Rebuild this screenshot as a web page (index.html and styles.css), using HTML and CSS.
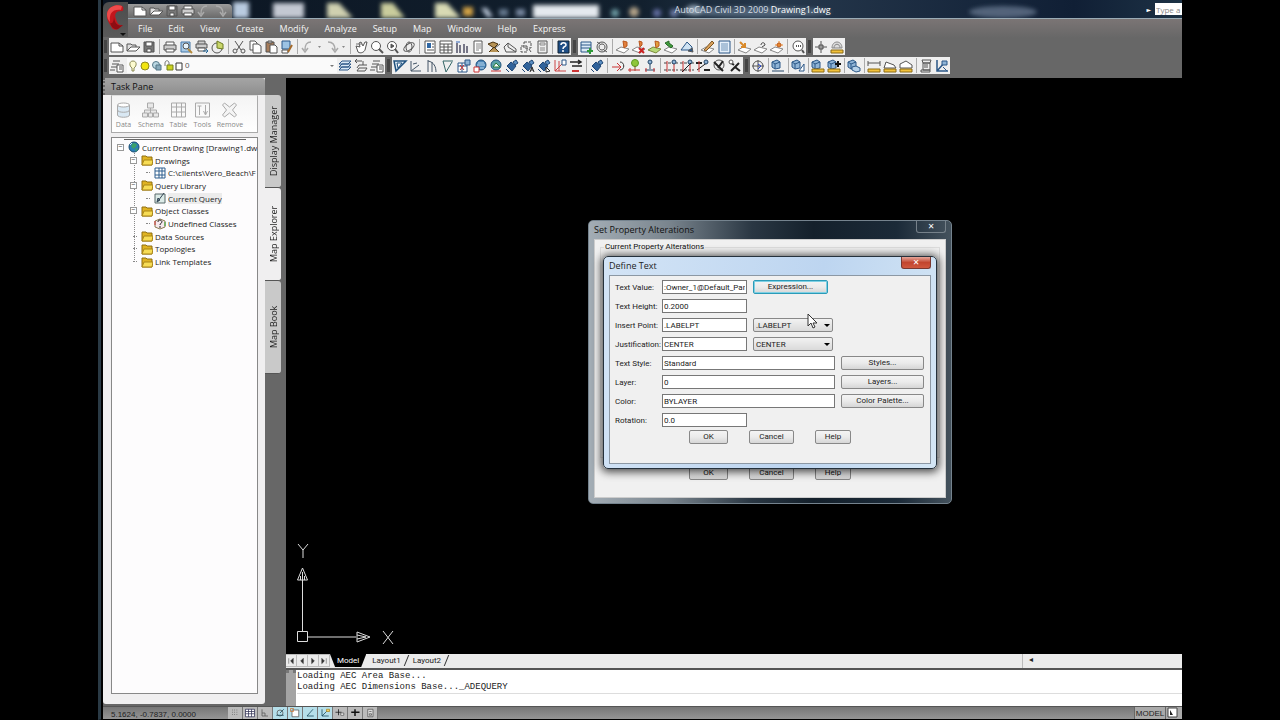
FILE: index.html
```html
<!DOCTYPE html>
<html lang="en">
<head>
    <meta charset="UTF-8">
    <meta name="viewport" content="width=device-width, initial-scale=1.0">
    <title>AutoCAD Civil 3D 2009 Drawing1.dwg</title>
    <link rel="stylesheet" href="styles.css">
</head>
<body>
    <div class="app">
        <header class="titlebar">
            <svg class="glass" aria-hidden="true">
                <defs><filter id="soft" x="-20%" y="-50%" width="140%" height="200%"><feGaussianBlur stdDeviation="2"/></filter></defs>
                <g filter="url(#soft)">
                    <rect x="130" y="2" width="16" height="16" fill="#b9cbe0"/>
                    <rect x="170" y="3" width="31" height="15" fill="#c3c8d2"/>
                    <path d="M224 3h12l14 15h-26z" fill="#cfd0b0"/>
                    <path d="M278 3h12l12 15h-24z" fill="#c9cc9c"/>
                    <path d="M332 3h12l14 15h-26z" fill="#d8dab4"/>
                    <rect x="360" y="7" width="10" height="9" fill="#d0a044"/>
                    <path d="M378 8l6 0 6 9h-6z" fill="#b7c4d6"/>
                    <rect x="396" y="9" width="9" height="7" fill="#65788e"/>
                    <rect x="413" y="9" width="9" height="7" fill="#7888a0"/>
                    <rect x="430" y="5" width="66" height="13" fill="#e4e9ee"/>
                    <circle cx="512" cy="13" r="4" fill="#6b98a0"/>
                    <circle cx="531" cy="12" r="5" fill="#b0a087"/>
                    <circle cx="554" cy="13" r="4" fill="#626da0"/>
                    <circle cx="571" cy="13" r="4" fill="#6d7ba8"/>
                    <ellipse cx="650" cy="12" rx="78" ry="5" fill="#506478"/>
                    <ellipse cx="591" cy="10" rx="8" ry="5" fill="#91a2b2"/>
                    <ellipse cx="900" cy="12" rx="34" ry="6" fill="#52647a"/>
                </g>
            </svg>
            <button class="app-logo" aria-label="Application menu">
                <svg viewBox="0 0 24 32">
                    <path d="M19 2c-5-2-14 0-15 8-1 6 3 10 5 14 1 2 4 2 6 1l5-4c-4 1-6-2-7-6-2-5 0-8 5-8 3 1 3-4 1-5z" fill="#c3171d"/>
                    <path d="M19 2c-5-2-14 0-15 8 0 3 1 6 3 8C6 10 9 5 18 6z" fill="#ee4a4a"/>
                    <path d="M11 11c0 6 2 12 9 10l-5 4c-4 1-6-1-8-6 3 1 4-2 4-8z" fill="#8d0d13"/>
                    <path d="M17 29h6l-3 3z" fill="#111"/>
                </svg>
            </button>
            <div class="quick" data-tools="new open save print undo redo"></div>
            <h1 class="title">AutoCAD Civil 3D 2009 <b>Drawing1.dwg</b></h1>
            <span class="play">&#9658;</span>
            <input class="search" type="text" placeholder="Type a k" aria-label="Search">
        </header>
        <nav class="menubar">
            <a href="#">File</a>
            <a href="#">Edit</a>
            <a href="#">View</a>
            <a href="#">Create</a>
            <a href="#">Modify</a>
            <a href="#">Analyze</a>
            <a href="#">Setup</a>
            <a href="#">Map</a>
            <a href="#">Window</a>
            <a href="#">Help</a>
            <a href="#">Express</a>
        </nav>
        <div class="toolrow">
            <div class="toolbar" data-tools="new open save | print preview publish dwf | cut copy paste match | undo arrow redo arrow | pan zoom zoomwin orbit | props center palette sheet markup plane refs calc | help"></div>
            <div class="toolbar" data-tools="dbadd sync | pin pinx pingrn pinret shape | pencil list | arrin arrswap arrnew | inspect"></div>
            <div class="toolbar" data-tools="cross dome"></div>
        </div>
        <div class="toolrow">
            <div class="toolbar layers">
                <div class="toolset" data-tools="layer"></div>
                <label class="layer-combo">
                    <svg viewBox="0 0 58 16" aria-hidden="true">
                        <path d="M5 10c-3-2-3-7 1-7s4 5 1 7v3H5z" fill="#fdfbd0" stroke="#8a8a55"/>
                        <circle cx="18" cy="8" r="4" fill="#f1e511" stroke="#8f8a20"/>
                        <circle cx="29" cy="7" r="3.500" fill="#bcd8e3" stroke="#578"/><path d="M29 7h5v5h-5z" fill="#8ab" stroke="#578"/>
                        <path d="M38 8V5c0-3 4-3 4 0v2" fill="none" stroke="#777"/><path d="M40 7h6v5h-6z" fill="#cbd321" stroke="#77801a"/>
                        <path d="M49 5h6v7h-6z" fill="#fff" stroke="#333"/>
                    </svg>
                    <select aria-label="Layer"><option>0</option></select>
                </label>
                <div class="toolset" data-tools="layer1 layer2 layer"></div>
            </div>
            <div class="toolbar" data-tools="tri ang1 ang2 ang3 chk globe globe2 sat sata satb redgrid lines | sat | turn tree node | rail railx railz bolt screw"></div>
            <div class="toolbar tight" data-tools="target | cube | cubetri | cubebar cubeplus | cubes | ruler area area2 | scroll plot"></div>
        </div>
        <main class="workspace">
            <aside class="task-pane">
                <h2 class="pane-title">Task Pane</h2>
                <div class="pane-tools">
                    <button><svg viewBox="0 0 18 18"><path d="M3 4v10c0 3 12 3 12 0V4" fill="#d9e8f3"/><ellipse cx="9" cy="4" rx="6" ry="2" fill="#fff"/><path d="M3 9c0 3 12 3 12 0"/></svg>Data</button>
                    <button><svg viewBox="0 0 18 18"><path d="M6 2h6v5H6zM1 12h5v4H1zM7 12h4v4H7zM12 12h5v4h-5zM9 7v5M3 12V9h12v3" fill="#e8e8e8"/></svg>Schema</button>
                    <button><svg viewBox="0 0 18 18"><path d="M2 2h14v14H2zM2 6h14M2 11h14M7 2v14M12 2v14"/></svg>Table</button>
                    <button><svg viewBox="0 0 18 18"><path d="M2 2h14v14H2z"/><path d="M6 5v9M4 5h4M12 4v9M10 10l2 4 2-4"/></svg>Tools</button>
                    <button><svg viewBox="0 0 18 18"><path d="M2 4l2-2 5 4 5-4 2 2-4 5 4 5-2 2-5-4-5 4-2-2 4-5z" fill="#f4f4f4"/></svg>Remove</button>
                </div>
                <div class="tree-box">
                    <svg class="symbols" aria-hidden="true">
                        <symbol id="folder" viewBox="0 0 12 12"><path d="M1 2h4l1 1h5v8H1z" fill="#e0b322" stroke="#8f6f10"/><path d="M1 11l2-5h9l-1 5z" fill="#f7dc55" stroke="#a98519"/></symbol>
                        <symbol id="globe" viewBox="0 0 12 12"><circle cx="6" cy="6" r="5" fill="#2a7fb8" stroke="#164a70"/><path d="M5 2l4 1-1 3-3 2-2-3zM7 8l3-1-2 4z" fill="#3aa06a"/><path d="M2 4l2-2" stroke="#cfeaff"/></symbol>
                        <symbol id="grid" viewBox="0 0 12 12"><path d="M1 1h10v10H1z" fill="#fff" stroke="#2f5f8f"/><path d="M1 4h10M1 8h10M5 1v10M8 1v10" stroke="#2f5f8f"/></symbol>
                        <symbol id="query" viewBox="0 0 12 12"><path d="M1 2h10v9H1z" fill="#dcebe8" stroke="#58686a"/><path d="M4 9l6-8M3 10l1-4 2 2z" stroke="#345" fill="#9bb"/></symbol>
                        <symbol id="ask" viewBox="0 0 12 12"><path d="M6 1l5 2v6l-5 2-5-2V3z" fill="#f6e9ee" stroke="#8a7a50"/><path d="M4 4c0-3 4-2 4 0 0 1-2 1-2 3M6 8v2" fill="none" stroke="#222"/><path d="M1 3v4" stroke="#c33"/><path d="M11 4v4" stroke="#3a3"/></symbol>
                    </svg>
                    <ul class="tree">
                        <li><i class="twist">&minus;</i><svg><use href="#globe"/></svg><span>Current Drawing [Drawing1.dw</span></li>
                        <li class="level1"><i class="twist">&minus;</i><svg><use href="#folder"/></svg><span>Drawings</span></li>
                        <li class="level2"><i class="twig"></i><svg><use href="#grid"/></svg><span>C:\clients\Vero_Beach\F</span></li>
                        <li class="level1"><i class="twist">&minus;</i><svg><use href="#folder"/></svg><span>Query Library</span></li>
                        <li class="level2"><i class="twig"></i><svg><use href="#query"/></svg><span class="current">Current Query</span></li>
                        <li class="level1"><i class="twist">&minus;</i><svg><use href="#folder"/></svg><span>Object Classes</span></li>
                        <li class="level2"><i class="twig"></i><svg><use href="#ask"/></svg><span>Undefined Classes</span></li>
                        <li class="level1"><i class="twig"></i><svg><use href="#folder"/></svg><span>Data Sources</span></li>
                        <li class="level1"><i class="twig"></i><svg><use href="#folder"/></svg><span>Topologies</span></li>
                        <li class="level1"><i class="twig"></i><svg><use href="#folder"/></svg><span>Link Templates</span></li>
                    </ul>
                </div>
            </aside>
            <div class="side-tabs">
                <button>Display Manager</button>
                <button class="active">Map Explorer</button>
                <button>Map Book</button>
            </div>
            <section class="drawing">
                <div class="canvas">
                    <svg class="ucs" viewBox="0 0 100 106" aria-hidden="true">
                        <path d="M2.500 92.500h10v10h-10zM7.500 92V40M13 98h48M7.500 29l-5 12h10zM75 98l-13-5v10z"/>
                        <path d="M7.500 33v8M5.500 37v4M9.500 37v4M62 96l9 2-9 2"/>
                        <path d="M3 5l5 6 5-6M8 11v8M88 92l10 13M98 92l-10 13"/>
                    </svg>
                    <div class="window outer">
                        <div class="window-title">Set Property Alterations<button class="close" aria-label="Close">&#10005;</button></div>
                        <div class="window-body">
                            <fieldset><legend>Current Property Alterations</legend></fieldset>
                            <div class="actions">
                                <button class="btn ok">OK</button>
                                <button class="btn cancel">Cancel</button>
                                <button class="btn help">Help</button>
                            </div>
                        </div>
                    </div>
                    <div class="window inner">
                        <div class="window-title">Define Text<button class="close" aria-label="Close">&#10005;</button></div>
                        <form class="window-body">
                            <div class="fields">
                                <label for="value">Text Value:</label>
                                <input id="value" type="text" value=":Owner_1@Default_Parc">
                                <button type="button" class="btn focus">Expression...</button>

                                <label for="height">Text Height:</label>
                                <input id="height" type="text" value="0.2000">

                                <label for="insert">Insert Point:</label>
                                <input id="insert" type="text" value=".LABELPT">
                                <span class="drop"><select aria-label="Insert point list"><option>.LABELPT</option></select></span>

                                <label for="just">Justification:</label>
                                <input id="just" type="text" value="CENTER">
                                <span class="drop"><select aria-label="Justification list"><option>CENTER</option></select></span>

                                <label for="style">Text Style:</label>
                                <input id="style" class="wide" type="text" value="Standard">
                                <button type="button" class="btn side">Styles...</button>

                                <label for="layer">Layer:</label>
                                <input id="layer" class="wide" type="text" value="0">
                                <button type="button" class="btn side">Layers...</button>

                                <label for="color">Color:</label>
                                <input id="color" class="wide" type="text" value="BYLAYER">
                                <button type="button" class="btn side">Color Palette...</button>

                                <label for="rotation">Rotation:</label>
                                <input id="rotation" type="text" value="0.0">
                            </div>
                            <div class="actions">
                                <button type="button" class="btn ok">OK</button>
                                <button type="button" class="btn cancel">Cancel</button>
                                <button type="button" class="btn help">Help</button>
                            </div>
                        </form>
                    </div>
                    <svg class="pointer" viewBox="0 0 10 16" aria-hidden="true"><path d="M1 1v12l3-3 2 5 2-1-2-4h4z" fill="#fff" stroke="#333"/></svg>
                </div>
                <div class="layout-bar">
                    <div class="nav-buttons">
                        <button aria-label="First"><svg viewBox="0 0 11 12"><path d="M3 3v6M8 3v6L5 6z"/></svg></button>
                        <button aria-label="Previous"><svg viewBox="0 0 11 12"><path d="M7 3v6L4 6z"/></svg></button>
                        <button aria-label="Next"><svg viewBox="0 0 11 12"><path d="M4 3v6l3-3z"/></svg></button>
                        <button aria-label="Last"><svg viewBox="0 0 11 12"><path d="M8 3v6M3 3v6l3-3z"/></svg></button>
                    </div>
                    <button class="layout active">Model</button>
                    <button class="layout">Layout1</button>
                    <button class="layout">Layout2</button>
                    <div class="hscroll">&#9666;</div>
                </div>
                <div class="command">
                    <div class="command-grip"></div>
                    <div class="command-text">
                        <p>Loading AEC Area Base...</p>
                        <p>Loading AEC Dimensions Base..._ADEQUERY</p>
                    </div>
                </div>
            </section>
        </main>
        <footer class="statusbar">
            <span class="coords">5.1624, -0.7837, 0.0000</span>
            <div class="modes" data-tools="snap gridmode ortho polar osnap otrack ducs dyn lwt qp"></div>
            <button class="space">MODEL</button>
            <button class="maximize" aria-label="Maximize viewport"><svg viewBox="0 0 12 12"><path d="M2 1h9v9H2z" fill="#fff" stroke="#444"/><path d="M4 3v5h3z" fill="#222"/></svg></button>
        </footer>
    </div>
    <script src="toolbars.js"></script>
</body>
</html>
```
FILE: styles.css
```css
* {
    box-sizing: border-box;
}
body {
    margin: 0;
    background: #000;
    color: #222;
    font-family: "Open Sans", "Noto Sans", sans-serif;
    font-size: 9px;
}
button,
input,
select {
    font: inherit;
    color: inherit;
    margin: 0;
    padding: 0;
    border: 0;
    border-radius: 0;
    background: none;
}
a {
    color: inherit;
    text-decoration: none;
}
h1,
h2,
p,
ul {
    margin: 0;
    padding: 0;
    font-size: inherit;
    font-weight: normal;
    list-style: none;
}
.app {
    display: flex;
    flex-direction: column;
    height: 100vh;
    margin: 0 98px;
    border-left: 5px ridge #2a3a45;
    border-bottom: 1px solid #000;
    background: #676767;
    overflow: hidden;
}

/* title bar */
.titlebar {
    position: relative;
    display: flex;
    align-items: center;
    flex: none;
    height: 19px;
    padding-left: 25px;
    background: linear-gradient(90deg, #0b1522, #12202e 50%, #26384c 62%, #101f35 90%, #1d3245);
    border-bottom: 1px solid #9aabb5;
    color: #d5dde4;
}
.glass {
    position: absolute;
    left: 0;
    top: 0;
    width: 100%;
    height: 18px;
}
.app-logo {
    position: absolute;
    left: 0;
    top: 2px;
    z-index: 2;
    width: 25px;
    height: 35px;
    background: linear-gradient(#4c4c4c, #5a5a5a);
    border-radius: 6px 0 0 0;
}
.app-logo svg {
    display: block;
    width: 24px;
    height: 32px;
    overflow: visible;
}
.quick {
    position: relative;
    align-self: flex-end;
    display: flex;
    align-items: center;
    height: 14px;
    padding: 0 4px;
    background: linear-gradient(#9a9a9a, #6a6a6a);
    border-radius: 0 4px 0 0;
}
.title {
    position: absolute;
    left: 0;
    right: 0;
    padding-left: 220px;
    text-align: center;
    line-height: 19px;
}
.title b {
    font-weight: normal;
    color: #fff;
}
.play {
    position: relative;
    margin-left: auto;
    margin-right: 4px;
    font-family: "DejaVu Sans", sans-serif;
    font-size: 6px;
    color: #fff;
}
.search {
    position: relative;
    width: 27px;
    height: 12px;
    padding-left: 1px;
    background: #fff;
    font-size: 8px;
}
.search::placeholder {
    color: #888;
    opacity: 1;
}

/* menu */
.menubar {
    display: flex;
    align-items: center;
    flex: none;
    gap: 16px;
    height: 19px;
    padding-left: 35px;
    background: linear-gradient(#7b7575, #676767);
    color: #f4f4f4;
}

/* toolbars */
.toolrow {
    display: flex;
    flex: none;
    gap: 7px;
    height: 19px;
    padding: 0 0 2px 6px;
}
.toolbar,
.toolset {
    display: flex;
    align-items: center;
    background: #efefef;
}
.toolrow > .toolbar {
    position: relative;
}
.toolrow > .toolbar::before {
    content: "";
    position: absolute;
    left: -5px;
    top: 2px;
    bottom: 2px;
    width: 3px;
    background: #444;
}
.tool {
    width: 16px;
    height: 16px;
}
.tool svg {
    display: block;
    width: 16px;
    height: 16px;
    fill: none;
    stroke: #555;
}
.tool-arrow,
.tool-arrow svg {
    width: 8px;
}
.divider {
    width: 1px;
    height: 15px;
    margin: 0 2px;
    background: #aaa;
}
.tight .divider {
    margin: 0 1px 0 2px;
}
.layer-combo {
    position: relative;
    display: flex;
    align-items: center;
    width: 210px;
    height: 15px;
    margin-left: 2px;
    background: #fafafa;
}
.layer-combo svg {
    width: 58px;
    height: 16px;
}
.layer-combo select {
    flex: 1;
    appearance: none;
    font-family: "Liberation Sans", sans-serif;
    font-size: 8px;
    color: #555;
}
.layer-combo::after {
    content: "";
    position: absolute;
    right: 3px;
    top: 7px;
    border: 2px solid transparent;
    border-top-color: #777;
}

/* task pane */
.workspace {
    display: flex;
    flex: 1;
    min-height: 0;
    padding-top: 2px;
}
.task-pane {
    display: flex;
    flex-direction: column;
    width: 162px;
    margin-bottom: 2px;
    padding: 0 7px 10px 8px;
    background: #f0eff0;
    border-radius: 0 0 3px 3px;
}
.pane-title {
    margin: 0 -7px 0 -8px;
    padding-left: 6px;
    height: 17px;
    line-height: 17px;
    background: linear-gradient(#a5a5a5, #8e8e8e);
    border-left: 2px dotted #666;
    border-radius: 0 3px 0 0;
    color: #111;
}
.pane-tools {
    display: flex;
    height: 38px;
    padding-top: 5px;
    padding-left: 2px;
    gap: 5px;
    align-items: flex-start;
    border: 1px solid #aaa;
    border-top-color: #ddd;
    background: linear-gradient(#f4f4f4, #fff);
}
.pane-tools button {
    display: flex;
    flex-direction: column;
    align-items: center;
    font-size: 7px;
    line-height: 12px;
    color: #888;
}
.pane-tools svg {
    width: 19px;
    height: 18px;
    fill: none;
    stroke: #aaa;
}
.tree-box {
    flex: 1;
    margin-top: 4px;
    border: 1px solid #888;
    background: #fdfcfd;
    overflow: hidden;
}
.tree-box::before {
    content: "";
    display: block;
    margin: 1px 11px 1px 12px;
    height: 1px;
    background: #666;
}
.symbols {
    position: absolute;
    width: 0;
    height: 0;
}
.tree {
    position: relative;
    display: grid;
    grid-template-rows: repeat(10, 1fr);
    height: 127px;
    padding-left: 5px;
    font-size: 8px;
}
.tree::before {
    content: "";
    position: absolute;
    left: 22px;
    top: 12px;
    bottom: 6px;
    border-left: 1px dotted #888;
}
.tree li {
    position: relative;
    display: flex;
    align-items: center;
    white-space: nowrap;
}
.tree li svg {
    flex: none;
    width: 12px;
    height: 12px;
    margin: 0 2px 0 4px;
}
.tree .level1 {
    padding-left: 13px;
}
.tree .level2 {
    padding-left: 26px;
}
.twist {
    flex: none;
    width: 7px;
    height: 7px;
    border: 1px solid #999;
    background: #fff;
    font-style: normal;
    font-size: 7px;
    line-height: 4px;
    text-align: center;
}
.twig {
    flex: none;
    width: 4px;
    margin-left: 3px;
    border-top: 1px dotted #888;
}
.current {
    background: #ececec;
}
.side-tabs {
    display: flex;
    flex-direction: column;
    width: 21px;
    padding-top: 17px;
    padding-right: 5px;
}
.side-tabs button {
    height: 93px;
    writing-mode: vertical-rl;
    transform: rotate(180deg);
    background: #c9c9c9;
    border-top: 1px solid #555;
    border-radius: 3px 0 0 3px;
    line-height: 15px;
    color: #222;
}
.side-tabs .active {
    background: #f0eff0;
}

/* drawing area */
.drawing {
    display: flex;
    flex-direction: column;
    flex: 1;
    min-width: 0;
}
.canvas {
    position: relative;
    flex: 1;
    background: #000;
}
.ucs {
    position: absolute;
    left: 9px;
    bottom: 9px;
    width: 100px;
    height: 106px;
    fill: none;
    stroke: #ddd;
}
.window {
    position: absolute;
    display: flex;
    flex-direction: column;
    font-size: 9px;
    border-radius: 5px;
}
.window-title {
    display: flex;
    flex: none;
    justify-content: space-between;
    height: 18px;
    line-height: 17px;
}
.window-body {
    flex: 1;
    background: #f0f0f0;
    font-family: Roboto, "Liberation Sans", sans-serif;
    font-size: 8px;
}
.outer {
    left: 302px;
    top: 142px;
    width: 364px;
    height: 284px;
    padding: 0 5px 5px;
    background: linear-gradient(90deg, #a3adb5, #7a858e 22%, #2a3743 45%, #14202b 62%, #1b2a38 85%, #44525d);
    border: 1px solid #75838e;
    color: #111;
}
.outer .window-body {
    display: flex;
    flex-direction: column;
    justify-content: flex-end;
    padding: 0 0 17px;
    border: 1px solid #ccc;
}
.outer fieldset {
    flex: 1;
    margin: 0 5px 5px;
    padding: 0 3px;
    border: 1px solid #ddd;
}
.outer legend {
    padding: 0 1px;
    line-height: 14px;
}
.outer .actions {
    padding-left: 94px;
}
.inner {
    left: 317px;
    top: 178px;
    width: 334px;
    height: 213px;
    padding: 0 5px 4px;
    background: linear-gradient(100deg, #d3e4f6, #bdd5f0 60%, #d4e6f5);
    border: 1px solid #25313c;
    box-shadow: 0 1px 9px 2px rgba(0, 0, 0, 0.7);
}
.inner .window-body {
    padding: 4px 5px 0;
    border: 1px solid #8c98a4;
}
.close {
    width: 30px;
    height: 12px;
    line-height: 10px;
    border: 1px solid #76818a;
    border-top: 0;
    border-radius: 0 0 3px 3px;
    font-family: "DejaVu Sans", sans-serif;
    font-size: 8px;
    font-weight: bold;
    color: #fff;
}
.inner .close {
    background: linear-gradient(#e6a79b, #c2452f 50%, #d0583f);
    border-color: #7a3730;
}
.fields {
    display: grid;
    grid-template-columns: 47px 85px 6px 75px 5px 8px 83px;
    grid-auto-rows: 14px;
    row-gap: 5px;
}
.fields label {
    grid-column: 1;
    line-height: 15px;
    white-space: nowrap;
}
.fields input {
    grid-column: 2;
    width: 100%;
    padding: 0 1px;
    border: 1px solid #777;
    background: #fff;
}
.fields .wide {
    grid-column: 2 / 6;
    width: 173px;
}
.fields .focus {
    grid-column: 4;
}
.fields .side {
    grid-column: 7;
}
.btn {
    height: 14px;
    line-height: 12px;
    border: 1px solid #888;
    border-radius: 2px;
    background: linear-gradient(#f4f4f4, #ebebeb 50%, #d6d6d6);
    text-align: center;
}
.btn.focus {
    border-color: #2b9bb8;
    box-shadow: inset 0 0 0 1px #7fd0e4;
}
.drop {
    position: relative;
    grid-column: 4 / 6;
}
.drop select {
    appearance: none;
    display: block;
    width: 100%;
    height: 14px;
    padding-left: 2px;
    border: 1px solid #888;
    border-radius: 2px;
    background: linear-gradient(#f2f2f2, #dadada);
}
.drop::after {
    content: "";
    position: absolute;
    right: 3px;
    top: 6px;
    border: 3px solid transparent;
    border-top-color: #000;
}
.actions {
    display: flex;
    padding: 3px 0 0 74px;
}
.ok {
    width: 39px;
    margin-right: 21px;
}
.cancel {
    width: 45px;
    margin-right: 21px;
}
.help {
    width: 36px;
}
.pointer {
    position: absolute;
    left: 521px;
    top: 235px;
    width: 10px;
    height: 16px;
}

/* layout tabs */
.layout-bar {
    display: flex;
    flex: none;
    height: 14px;
    background: #ebebeb;
    font-family: Roboto, "Liberation Sans", sans-serif;
    font-size: 8px;
}
.nav-buttons {
    display: flex;
}
.nav-buttons button {
    width: 11px;
    height: 13px;
    border: 1px solid #bbb;
    border-left: 0;
}
.nav-buttons svg {
    display: block;
    width: 10px;
    height: 12px;
    fill: #333;
    stroke: #333;
    stroke-width: 0.500;
}
.layout {
    position: relative;
    height: 13px;
    padding: 0 6px;
}
.layout::after {
    content: "";
    position: absolute;
    right: 0;
    top: 1px;
    height: 11px;
    border-right: 1px solid #333;
    transform: skewX(-22deg);
}
.layout.active {
    padding: 0 7px;
    background: #000;
    color: #fff;
    clip-path: polygon(0 0, 100% 0, 86% 100%, 14% 100%);
}
.hscroll {
    width: 160px;
    margin-left: auto;
    padding-left: 6px;
    border-left: 1px solid #bbb;
    font-family: "DejaVu Sans", sans-serif;
    line-height: 12px;
}
.command {
    display: flex;
    flex: none;
    height: 38px;
    border-top: 2px solid #555;
    background: #fff;
}
.command-grip {
    width: 10px;
    background: #a4a4a4;
    border-top: 3px dotted #777;
}
.command-text {
    flex: 1;
    padding-top: 1px;
    padding-left: 1px;
    font-family: "Liberation Mono", "Courier New", monospace;
    font-size: 9px;
    line-height: 11px;
    color: #222;
}
.command-text p:last-child {
    border-bottom: 1px solid #ddd;
}

/* status bar */
.statusbar {
    display: flex;
    flex: none;
    align-items: stretch;
    height: 13px;
    background: linear-gradient(#777, #959595);
    border-top: 1px solid #555;
    font-family: "Liberation Sans", Arial, sans-serif;
    font-size: 8px;
}
.coords {
    width: 125px;
    padding-left: 8px;
    line-height: 16px;
}
.modes {
    display: flex;
}
.modes .tool {
    width: 15px;
    height: 12px;
    background: #bbb;
    border-right: 1px solid #777;
}
.modes .tool:nth-child(n+4):nth-child(-n+7) {
    background: #b5dfea;
}
.modes .tool svg {
    width: 14px;
    height: 12px;
}
.space,
.maximize {
    border-left: 1px solid #666;
    background: #aaa;
}
.space {
    width: 31px;
    margin-left: auto;
    line-height: 14px;
}
.maximize {
    width: 17px;
}
.maximize svg {
    display: block;
    width: 12px;
    height: 12px;
}
```
FILE: toolbars.js
```javascript
const cube = '<path d="M2 4l5-2 3 2v6l-5 1-3-2z" fill="#8fb4d6" stroke="#2b5787"/><path d="M2 4l3 2 5-2M5 6v5" stroke="#2b5787"/>';
const pad = '<path d="M1 11l5-3 8 2-5 4z" fill="#fff" stroke="#888"/>';
const bar = '<path d="M2 11h12v3H2z" fill="#f3c23a" stroke="#8a6a16"/>';
const sat = '<path d="M3 8l4-4 5 4-4 5z" fill="#31639b" stroke="#1f4674"/><path d="M9 4l3-2 2 3-3 2zM2 11l3 3" fill="#5a8fc4" stroke="#1f4674"/>';
const layer = '<path d="M4 3h7M3 6h7M2 9h6M1 12h5"/>';
const rail = '<path d="M1 5h14M1 12h14" stroke="#444" stroke-dasharray="3 1"/><path d="M4 3v11M11 6v8" stroke="#c33"/><circle cx="11" cy="4" r="2" fill="#8fb4d6" stroke="#246"/>';

const icons = {
    new: '<path d="M2 4h8l4 3v6H2z" fill="#fff"/><path d="M10 4v3h4"/>',
    open: '<path d="M2 12V5h4l1 1h4v2" fill="#ddd"/><path d="M2 12l4-4h9l-4 4z" fill="#fff"/>',
    save: '<path d="M3 3h10v10H3z" fill="#777"/><path d="M5 3h6v4H5z" fill="#fff"/><path d="M6 10h4v3H6z" fill="#fff"/>',
    print: '<path d="M4 6V3h8v3" fill="#fff"/><path d="M2 6h12v5H2z" fill="#ccc"/><path d="M4 10h8v3H4z" fill="#fff"/>',
    preview: '<path d="M3 3h9v10H3z" fill="#a8cbe8" stroke="#4779a8"/><circle cx="8" cy="7" r="3" fill="#e6f3fb"/><path d="M10 10l4 4" stroke="#b58a3a" stroke-width="2"/>',
    publish: '<path d="M4 5V2h7v3M2 5h11v4H2z" fill="#ccc"/><path d="M4 9h7v3H4z" fill="#fff"/><path d="M9 12h5M12 10l2 2-2 2" stroke="#2a6a9a"/>',
    dwf: '<circle cx="7" cy="9" r="5" fill="#eee"/><path d="M7 9V2l6 3v5z" fill="#c9d66a" stroke="#6c7a22"/>',
    cut: '<path d="M4 2l6 9M12 2L6 11"/><circle cx="4" cy="12" r="2"/><circle cx="12" cy="12" r="2"/>',
    copy: '<path d="M3 2h5l2 2v7H3z" fill="#fff"/><path d="M6 5h5l3 2v7H6z" fill="#fff"/>',
    paste: '<path d="M3 3h8v10H3z" fill="#a67c5a"/><path d="M5 2h4v2H5z" fill="#ccc"/><path d="M7 6h5l2 2v6H7z" fill="#fff"/>',
    match: '<path d="M3 2h8v8H3z" fill="#9cc3e4" stroke="#2b5787"/><path d="M3 11h6v3H3z" fill="#fff"/><path d="M13 6l-4 7" stroke="#a46a2a" stroke-width="2"/>',
    undo: '<path d="M11 3C6 3 5 6 5 11M2 9l3 4 3-4" stroke="#aaa" stroke-width="1.5"/>',
    redo: '<path d="M4 3c5 0 7 3 7 8M8 9l3 4 3-4" stroke="#aaa" stroke-width="1.5"/>',
    arrow: '<path d="M2 7h3l-1.500 2z" fill="#888" stroke="none"/>',
    pan: '<path d="M3 7l2 6c3 2 6 0 7-2l2-8-2 0-2 4-2-4-2 1 1 4z" fill="#fff"/><path d="M3 5h6" stroke="#777"/>',
    zoom: '<circle cx="7" cy="7" r="4.500" fill="#fff"/><path d="M10 10l4 4" stroke-width="2"/>',
    zoomwin: '<circle cx="7" cy="7" r="4.500" fill="#fff"/><path d="M6 5v4l3-2z" fill="#555"/><path d="M10 10l3 4" stroke-width="2"/>',
    orbit: '<ellipse cx="8" cy="8" rx="6" ry="3" transform="rotate(-35 8 8)"/><ellipse cx="8" cy="8" rx="3" ry="5"/>',
    props: '<path d="M3 2h10v12H3z" fill="#fff"/><path d="M5 4h4v5H5z" fill="#2e67a5" stroke="none"/><path d="M10 5h2M10 8h2M5 11h7"/>',
    center: '<path d="M2 2h12v12H2z" fill="#fff"/><path d="M2 5h12M6 5v9M2 8h12M10 5v9M2 11h12"/>',
    palette: '<path d="M3 4v10M6 6v8M10 5v9M13 7v7" stroke-width="2" stroke="#778"/><path d="M2 3h4" stroke="#36b"/>',
    sheet: '<path d="M4 2h8v12H4z" fill="#fff"/><path d="M6 5h5M6 7h5M6 9h5M6 11h3" stroke="#888"/>',
    markup: '<path d="M2 5l5-2 5 2-4 4zM3 13l5-5 5 5" fill="#b79355" stroke="#4a3210"/><path d="M9 9l5-4"/>',
    plane: '<path d="M2 8l4-4 8 6v3H4zM6 4v4l8 5" fill="#eee"/>',
    refs: '<path d="M6 3h7v6H6zM3 7h6v6H3z" fill="#eee" stroke-dasharray="3 1"/><path d="M11 10l2 3"/>',
    calc: '<path d="M4 2h9v12H4z" fill="#eee"/><path d="M6 4h5v2H6zM6 9h5M6 11h5" stroke="#888"/>',
    help: '<path d="M3 2h11v12H3z" fill="#1e4e86" stroke="#123"/><path d="M6 6c0-3 5-3 5 0 0 2-3 1-3 4M8 11v2" stroke="#fff" stroke-width="1.5"/>',
    dbadd: '<path d="M3 3h10v10H3z" fill="#dbeaf6" stroke="#2b5787"/><path d="M3 6h10M3 9h10" stroke="#2b5787"/><path d="M9 12h6M12 9v6" stroke="#2e9a38" stroke-width="2"/>',
    sync: '<circle cx="8" cy="8" r="5"/><path d="M5 8c0-4 6-4 6 0s-6 4-6 0M3 3l3 2M13 13l-3-2"/>',
    pin: pad + '<path d="M8 2l4 1v4l-3 2z" fill="#e2803c" stroke="#b9581f"/>',
    pinx: pad + '<path d="M8 2l3 1v3l-2 2z" fill="#e2803c" stroke="#b9581f"/><path d="M8 9l5 5M13 9l-5 5" stroke="#c22" stroke-width="2"/>',
    pingrn: '<path d="M1 11l5-3 8 2-5 4z" fill="#b7d977" stroke="#7a8a3a"/><path d="M8 2l4 1v4l-3 2z" fill="#e2a03c" stroke="#b9581f"/>',
    pinret: pad + '<path d="M2 4l4-2v2l4 3-2 2-4-3z" fill="#3f9a3c" stroke="#2b6a28"/>',
    shape: '<path d="M2 11l6-8 5 5v3z" fill="#cfe3f3" stroke="#2b5787"/><path d="M9 12l4-3 1 4z" fill="#2b5787"/>',
    pencil: pad + '<path d="M4 11l8-9 2 2-8 8z" fill="#d9a15c" stroke="#7c5522"/>',
    list: '<path d="M3 2h11v12H3z" fill="#e6f0fa" stroke="#2b5787"/><path d="M5 5h7M5 7h7M5 9h7M5 11h7" stroke="#6f93b8"/>',
    arrin: pad + '<path d="M3 3l5 5M8 4v4H4" stroke="#d98a2a" stroke-width="2"/>',
    arrswap: pad + '<path d="M8 6c0-3 4-3 4 0l-3 2" stroke="#444"/>',
    arrnew: pad + '<circle cx="10" cy="6" r="2" fill="#e8862a" stroke="#b9581f"/><path d="M10 2v2M6 6h2M12 6h2" stroke="#e8862a"/>',
    inspect: '<circle cx="8" cy="7" r="5" fill="#fff"/><path d="M6 7h1M8 7h1M10 7h1M12 11l2 3" stroke-width="2"/>',
    cross: '<path d="M8 2v12M2 8h12"/><path d="M6 6h4v4H6z" fill="#999"/>',
    dome: '<path d="M3 9c0-8 10-8 10 0zM5 9c0-5 6-5 6 0" fill="#ddd" stroke="#888"/>' + bar,
    layer: layer + '<path d="M8 7h6v7H8z" fill="#fff"/><path d="M10 9h3M10 11h3"/>',
    layer1: '<path d="M2 12l3-3h9l-3 3zM2 9l3-3h9l-3 3zM2 6l3-3h9l-3 3z" fill="#d8e8f5" stroke="#2b5787"/>',
    layer2: '<path d="M4 13l2-3h8l-2 3zM4 10l2-3h8M2 3h7M2 3l2-2M2 3l2 2M10 3v4"/>',
    tri: '<path d="M2 3h12L4 13z" fill="#dbe8f3" stroke="#20527f" stroke-width="1.5"/><path d="M5 5h5l-4 5z" fill="#fff" stroke="#20527f"/>',
    ang1: '<path d="M3 3v10h10M3 13l8-6M5 6l4-1" stroke="#456"/>',
    ang2: '<path d="M4 2v12M4 3c6 1 8 6 8 11M8 4v10" stroke="#456"/>',
    ang3: '<path d="M3 3l3 11L12 4M3 3h10" stroke="#366"/>',
    chk: '<path d="M2 5h9v9H2zM2 8h9M6 5v9" fill="#fff" stroke="#2b5787"/><path d="M9 2h5v5H9z" fill="#8fb4d6" stroke="#2b5787"/><path d="M4 7l4 5M8 7l-4 5" stroke="#c33"/>',
    globe: '<circle cx="9" cy="7" r="5" fill="#4d88b8" stroke="#20527f"/><path d="M6 5h6M5 7h8M8 10h4" stroke="#bcd8ee"/><path d="M2 9h5v5H2z" fill="#fff" stroke="#c33"/>',
    globe2: '<circle cx="8" cy="7" r="5" fill="#5aa2a8" stroke="#20527f"/><path d="M5 9l3-4 4 4z" fill="#fff" stroke="#2a7a3a"/><path d="M3 13h10" stroke="#c33"/>',
    sat: sat,
    sata: sat + '<path d="M10 14l2-5 2 5M11 12h2" stroke="#222"/>',
    satb: sat + '<path d="M10 9l4 4-4 1z" fill="#fff" stroke="#222"/>',
    redgrid: '<path d="M3 2v11h11M3 13L13 3M7 3v10" stroke="#c44"/><path d="M10 2h4v5h-4z" fill="#fff" stroke="#2b5787"/>',
    lines: '<path d="M2 4h10M10 2l3 2-3 2M4 8h10" stroke="#222" stroke-width="1.5"/><path d="M4 13h7" stroke="#c33" stroke-width="2"/>',
    turn: '<path d="M2 9h8M7 5l4 4-4 4" stroke="#c33"/><path d="M10 4c5 0 5 8 0 8" stroke="#333"/>',
    tree: '<circle cx="9" cy="5" r="3.500" fill="#8fc63a" stroke="#5c9a22"/><path d="M9 8v5" stroke="#7a5a22"/><path d="M2 12h12M4 10v4" stroke="#c33"/>',
    node: '<circle cx="8" cy="4" r="2" fill="#8fb4d6" stroke="#246"/><path d="M8 6v5M3 12h10" stroke="#246"/><path d="M4 10v4M12 10v4" stroke="#c33"/>',
    rail: rail,
    railx: rail + '<path d="M3 14L12 5" stroke="#222"/>',
    railz: '<path d="M2 12L13 4" stroke="#222"/><path d="M1 5h6M9 12h6" stroke="#222" stroke-width="2"/><path d="M4 3v11" stroke="#c33"/><circle cx="11" cy="4" r="2" fill="#8fb4d6" stroke="#246"/>',
    bolt: '<circle cx="8" cy="7" r="5" fill="#eee"/><path d="M3 4l9 9M12 3l-5 7" stroke="#222" stroke-width="2"/>',
    screw: '<path d="M3 4l4 3M8 9l5 4M12 5l-8 8" stroke="#222" stroke-width="2"/><circle cx="4" cy="4" r="2" fill="#fff"/>',
    target: '<circle cx="8" cy="8" r="5"/><path d="M8 2v12M2 8h12"/><path d="M8 6l3 2-3 3" stroke="#24c"/>',
    cube: cube + '<path d="M2 13h12" stroke="#246"/>',
    cubetri: cube + '<path d="M9 13l5-7v7z" fill="#fff" stroke="#2b5787"/>',
    cubebar: cube + bar,
    cubeplus: cube + bar + '<path d="M9 6h6M12 3v6" stroke="#111" stroke-width="2"/>',
    cubes: cube + '<path d="M6 9l4-1 4 2v3l-4 1-4-2z" fill="#b5d0e8" stroke="#2b5787"/>',
    ruler: '<path d="M2 5h12M2 3v5M14 3v5"/>' + bar,
    area: '<path d="M2 10l2-6 8 3 2 3z" fill="#fff"/>' + bar,
    area2: '<path d="M2 10V6l6-3 6 4v3z" fill="#fff"/>' + bar,
    scroll: '<path d="M4 2h9l-1 3H5zM5 5h7v7H5zM3 12h9v2H3z" fill="#eee"/><path d="M6 7h4M6 9h4"/>',
    plot: '<path d="M3 2v11h11M3 13l8-9" stroke="#2b5787" stroke-width="1.5"/><path d="M8 3h5v4H8zM9 9l4 4" fill="#8fb4d6" stroke="#2b5787"/>',
    snap: '<path d="M4 4h9M4 7h9M4 10h9" stroke-dasharray="1 2"/>',
    gridmode: '<path d="M2 3h12v10H2zM2 6h12M2 9h12M6 3v10M10 3v10" fill="#fff" stroke="#335"/>',
    ortho: '<path d="M4 3v9h8M4 8h4v4"/>',
    polar: '<circle cx="8" cy="8" r="4"/><path d="M8 8l5-5M3 11h10" stroke="#145"/>',
    osnap: '<path d="M4 4h9v9H4z" fill="#fff"/><path d="M2 2h4v4H2z" stroke="#c73"/>',
    otrack: '<path d="M12 3l-8 9h9" stroke="#145"/>',
    ducs: '<path d="M4 3v9h9M4 12l7-7" stroke="#145"/><path d="M10 3h4v3h-4z" fill="#ec6" stroke="#a82"/>',
    dyn: '<path d="M6 3v8M2 7h8" stroke="#111"/><path d="M9 8h4v3H9z" fill="#fff"/>',
    lwt: '<path d="M8 3v9M3 7h11" stroke="#111" stroke-width="2"/>',
    qp: '<path d="M5 3h7v10H5zM7 6h3M7 9h3v2H7z" fill="#ddd"/>'
};

document.querySelectorAll("[data-tools]").forEach(function(bar) {
    bar.innerHTML = bar.dataset.tools.split(" ").map(function(name) {
        if (name === "|") {
            return '<span class="divider"></span>';
        }
        const box = name === "arrow" ? "0 0 8 16" : "0 0 16 16";
        return `<button class="tool tool-${name}" aria-label="${name}"><svg viewBox="${box}">${icons[name]}</svg></button>`;
    }).join("");
});
```
